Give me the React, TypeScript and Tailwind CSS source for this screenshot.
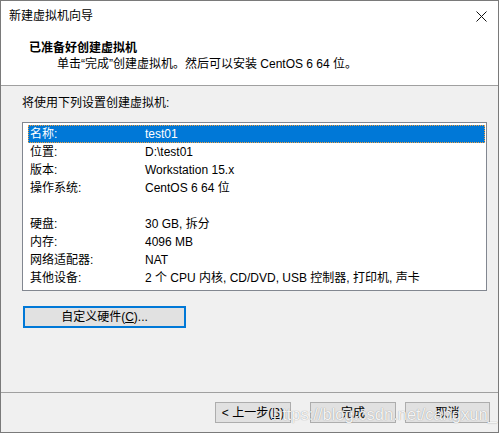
import React from "react";

type Row = { label: string; value: string };

const rows: Row[] = [
  { label: "名称:", value: "test01" },
  { label: "位置:", value: "D:\\test01" },
  { label: "版本:", value: "Workstation 15.x" },
  { label: "操作系统:", value: "CentOS 6 64 位" },
  { label: "", value: "" },
  { label: "硬盘:", value: "30 GB, 拆分" },
  { label: "内存:", value: "4096 MB" },
  { label: "网络适配器:", value: "NAT" },
  { label: "其他设备:", value: "2 个 CPU 内核, CD/DVD, USB 控制器, 打印机, 声卡" },
];

const font = {
  fontFamily: '"Liberation Sans", "Noto Sans CJK SC", sans-serif',
};

const WizardButton = ({ children, w }: { children: React.ReactNode; w: string }) => (
  <button
    className={`${w} h-[21px] border border-[#adadad] bg-[#e1e1e1] text-[12px] leading-none text-black flex items-center justify-center`}
  >
    {children}
  </button>
);

const App = () => {
  return (
    <div
      className="relative w-[499px] h-[433px] bg-[#f0f0f0] border border-[#7a7a7a] flex flex-col text-[12px] text-black overflow-hidden"
      style={font}
    >
      {/* title bar */}
      <div className="h-[30px] bg-white flex items-center justify-between pl-[8px] pr-[11px] shrink-0">
        <span className="leading-none">新建虚拟机向导</span>
        <svg width="11" height="11" viewBox="0 0 11 11">
          <path d="M0.5 0.5L10.5 10.5M10.5 0.5L0.5 10.5" stroke="#111" strokeWidth="1" />
        </svg>
      </div>

      {/* header */}
      <div className="h-[55px] bg-white pt-[9px] shrink-0 border-b border-[#a0a0a0]">
        <div className="pl-[28px] h-[16px] leading-[16px] font-bold">已准备好创建虚拟机</div>
        <div className="pl-[56px] h-[16px] leading-[16px]">
          单击“完成”创建虚拟机。然后可以安装 CentOS 6 64 位。
        </div>
      </div>

      {/* body */}
      <div className="flex-1 border-b border-[#a0a0a0] pl-[21px] pt-[9px]">
        <div className="h-[16px] leading-[16px]">将使用下列设置创建虚拟机:</div>
        <div className="mt-[11px] w-[465px] h-[169px] bg-white border border-[#828790] pl-[5px] pr-[1px] pt-[2px]">
          {rows.map((r, i) => (
            <div
              key={i}
              className={`h-[18px] flex items-center ${
                i === 0 ? "bg-[#0078d7] text-white outline-1 outline-dotted outline-[#f0a040] -outline-offset-1" : ""
              }`}
            >
              <span className="w-[117px] pl-[2px] shrink-0">{r.label}</span>
              <span className="whitespace-nowrap">{r.value}</span>
            </div>
          ))}
        </div>
        <button className="mt-[15px] ml-[1px] w-[163px] h-[22px] border-2 border-[#0078d7] bg-[#e1e1e1] flex items-center justify-center leading-none">
          自定义硬件(<span className="underline">C</span>)...
        </button>
      </div>

      {/* footer */}
      <div className="h-[39px] shrink-0 flex items-start justify-end pt-[9px] pr-[8px]">
        <WizardButton w="w-[76px]">
          &lt; 上一步(<span className="underline">B</span>)
        </WizardButton>
        <div className="ml-[19px]">
          <WizardButton w="w-[86px]">完成</WizardButton>
        </div>
        <div className="ml-[9px]">
          <WizardButton w="w-[85px]">取消</WizardButton>
        </div>
      </div>

      {/* watermark */}
      <span
        className="absolute left-[272px] top-[402px] text-[16.5px] leading-[22px] text-white/90 whitespace-nowrap pointer-events-none"
        style={{ textShadow: "0 0 1px rgba(0,0,0,0.45)" }}
      >
        https://blog.csdn.net/cangxun_
      </span>
    </div>
  );
};

export default App;
